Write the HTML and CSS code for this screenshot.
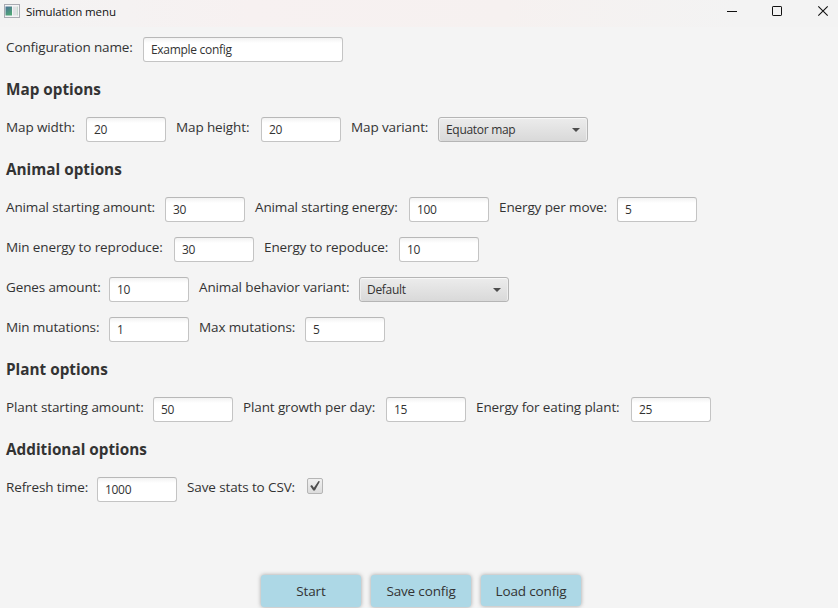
FILE: index.html
```html
<!DOCTYPE html>
<html lang="en">
<head>
<meta charset="utf-8">
<title>Simulation menu</title>
<link rel="stylesheet" href="styles.css">
</head>
<body>
<header class="titlebar">
  <svg class="app-icon" width="16" height="14" viewBox="0 0 16 14">
    <defs><linearGradient id="g" x1="0" y1="0" x2="0.5" y2="1"><stop offset="0" stop-color="#4a7196"/><stop offset="1" stop-color="#4fa578"/></linearGradient></defs>
    <rect x=".5" y=".5" width="15" height="13" fill="#f4f4f6" stroke="#a9abb2"/>
    <rect x="1.5" y="2.5" width="6.5" height="9" fill="url(#g)"/>
    <rect x="9" y="2.5" width="3" height="9" fill="#dfe1e4"/>
    <rect x="12.5" y="2.5" width="1.5" height="9" fill="#c5d8cf"/>
  </svg>
  <span class="title">Simulation menu</span>
  <svg class="controls" width="102" height="12" viewBox="0 0 102 12" fill="none" stroke="#111">
    <path d="M0 6.5H10"/>
    <rect x="45.5" y="1.5" width="9" height="9" rx=".6"/>
    <path d="M91.3 1.3l9.4 9.4M100.7 1.3l-9.4 9.4" stroke-width="1.1"/>
  </svg>
</header>
<main class="form">
  <div class="row"><label class="l-config">Configuration name:</label><input class="field wide" value="Example config"></div>
  <h2>Map options</h2>
  <div class="row">
    <label class="l-width">Map width:</label><input class="field" value="20">
    <label class="l-height">Map height:</label><input class="field" value="20">
    <label class="l-variant">Map variant:</label><div class="combo"><span>Equator map</span><i class="arrow"></i></div>
  </div>
  <h2>Animal options</h2>
  <div class="row">
    <label class="l-amount">Animal starting amount:</label><input class="field" value="30">
    <label class="l-energy">Animal starting energy:</label><input class="field" value="100">
    <label class="l-move">Energy per move:</label><input class="field" value="5">
  </div>
  <div class="row">
    <label class="l-minrep">Min energy to reproduce:</label><input class="field" value="30">
    <label class="l-rep">Energy to repoduce:</label><input class="field" value="10">
  </div>
  <div class="row">
    <label class="l-genes">Genes amount:</label><input class="field" value="10">
    <label class="l-behavior">Animal behavior variant:</label><div class="combo"><span>Default</span><i class="arrow"></i></div>
  </div>
  <div class="row">
    <label class="l-minmut">Min mutations:</label><input class="field" value="1">
    <label class="l-maxmut">Max mutations:</label><input class="field" value="5">
  </div>
  <h2>Plant options</h2>
  <div class="row">
    <label class="l-plant">Plant starting amount:</label><input class="field" value="50">
    <label class="l-growth">Plant growth per day:</label><input class="field" value="15">
    <label class="l-eating">Energy for eating plant:</label><input class="field" value="25">
  </div>
  <h2>Additional options</h2>
  <div class="row">
    <label class="l-refresh">Refresh time:</label><input class="field" value="1000">
    <label class="l-csv">Save stats to CSV:</label><span class="check"><svg width="16" height="16" viewBox="0 0 16 16"><path d="M3.200 8l1.700-.9 2 2.700 4.600-6.800 1.400.6-5 8.900H6.300z" fill="#4d4d4d"/></svg></span>
  </div>
</main>
<footer class="actions">
  <button>Start</button><button>Save config</button><button class="load">Load config</button>
</footer>
</body>
</html>
```
FILE: styles.css
```css
* { box-sizing: border-box; }
body {
  margin: 0;
  width: 838px;
  height: 608px;
  overflow: hidden;
  display: flex;
  flex-direction: column;
  background: #f4f4f4;
  color: #333;
  font-family: "Open Sans", "Noto Sans", sans-serif;
  font-size: 13.5px;
}
.titlebar {
  height: 27px;
  flex: none;
  display: flex;
  align-items: flex-start;
  padding: 4px 9px 0 4px;
  background: linear-gradient(90deg, #f3f3f3, #f7f1f1 30%, #f6f1f0 60%, #f3f3f3 88%);
}
.title {
  margin-left: 6px;
  font-size: 11.5px;
  line-height: 16px;
  letter-spacing: -0.1px;
  color: #111;
}
.controls { margin: 1px 0 0 auto; }
.form { padding: 10px 6px 0; height: 548px; flex: none; }
.row { display: flex; gap: 10px; height: 40px; }
label {
  flex: none;
  height: 20px;
  line-height: 20px;
  white-space: nowrap;
  letter-spacing: -0.12px;
}
h2 {
  margin: 0;
  height: 40px;
  line-height: 24px;
  font-size: 15.3px;
  font-weight: 700;
}
.field {
  width: 80px;
  height: 25px;
  padding: 0 7px;
  border: 1px solid #c4c4c4;
  border-top-color: #b8b8b8;
  border-radius: 3px;
  background: linear-gradient(#f2f2f2, #fff 5px);
  color: #333;
  font: 12px/20px "Open Sans", "Noto Sans", sans-serif;
  letter-spacing: -0.3px;
  outline: none;
}
.wide { width: 200px; }
.combo {
  display: flex;
  justify-content: space-between;
  align-items: center;
  width: 150px;
  height: 25px;
  padding: 0 7px;
  border: 1px solid #b5b5b5;
  border-radius: 3px;
  background: linear-gradient(#ececec, #d9d9d9);
  box-shadow: inset 0 1px #f7f7f7, inset 1px 0 #eee, inset -1px 0 #eee;
  font-size: 12px;
  line-height: 20px;
  letter-spacing: -0.3px;
}
.arrow {
  margin-top: 1px;
  border: 4px solid transparent;
  border-top-color: #4d4d4d;
  border-bottom: 0;
}
.check {
  width: 16px;
  height: 16px;
  margin-top: 1px;
  border: 1px solid #b5b5b5;
  border-radius: 2px;
  background: linear-gradient(#f0f0f0, #dcdcdc);
}
.check svg { display: block; margin: -1px; }
.actions { display: flex; gap: 10px; padding-left: 261px; }
button {
  width: 100px;
  height: 32px;
  padding: 0;
  border: 0;
  border-radius: 3px;
  background: #add8e6;
  box-shadow: 0 0 4px rgba(0, 0, 0, .35);
  color: #333;
  font: inherit;
  letter-spacing: -0.15px;
}
.load { height: 31px; }

.l-config { width: 127px; }
.l-width { width: 70px; }
.l-height { width: 75px; }
.l-variant { width: 77px; }
.l-amount { width: 149px; }
.l-energy { width: 144px; }
.l-move { width: 108px; }
.l-minrep { width: 158px; }
.l-rep { width: 125px; }
.l-genes, .l-minmut { width: 93px; }
.l-behavior { width: 150px; }
.l-maxmut { width: 96px; }
.l-plant { width: 137px; }
.l-growth { width: 133px; }
.l-eating { width: 145px; }
.l-refresh { width: 81px; }
.l-csv { width: 110px; }
```
